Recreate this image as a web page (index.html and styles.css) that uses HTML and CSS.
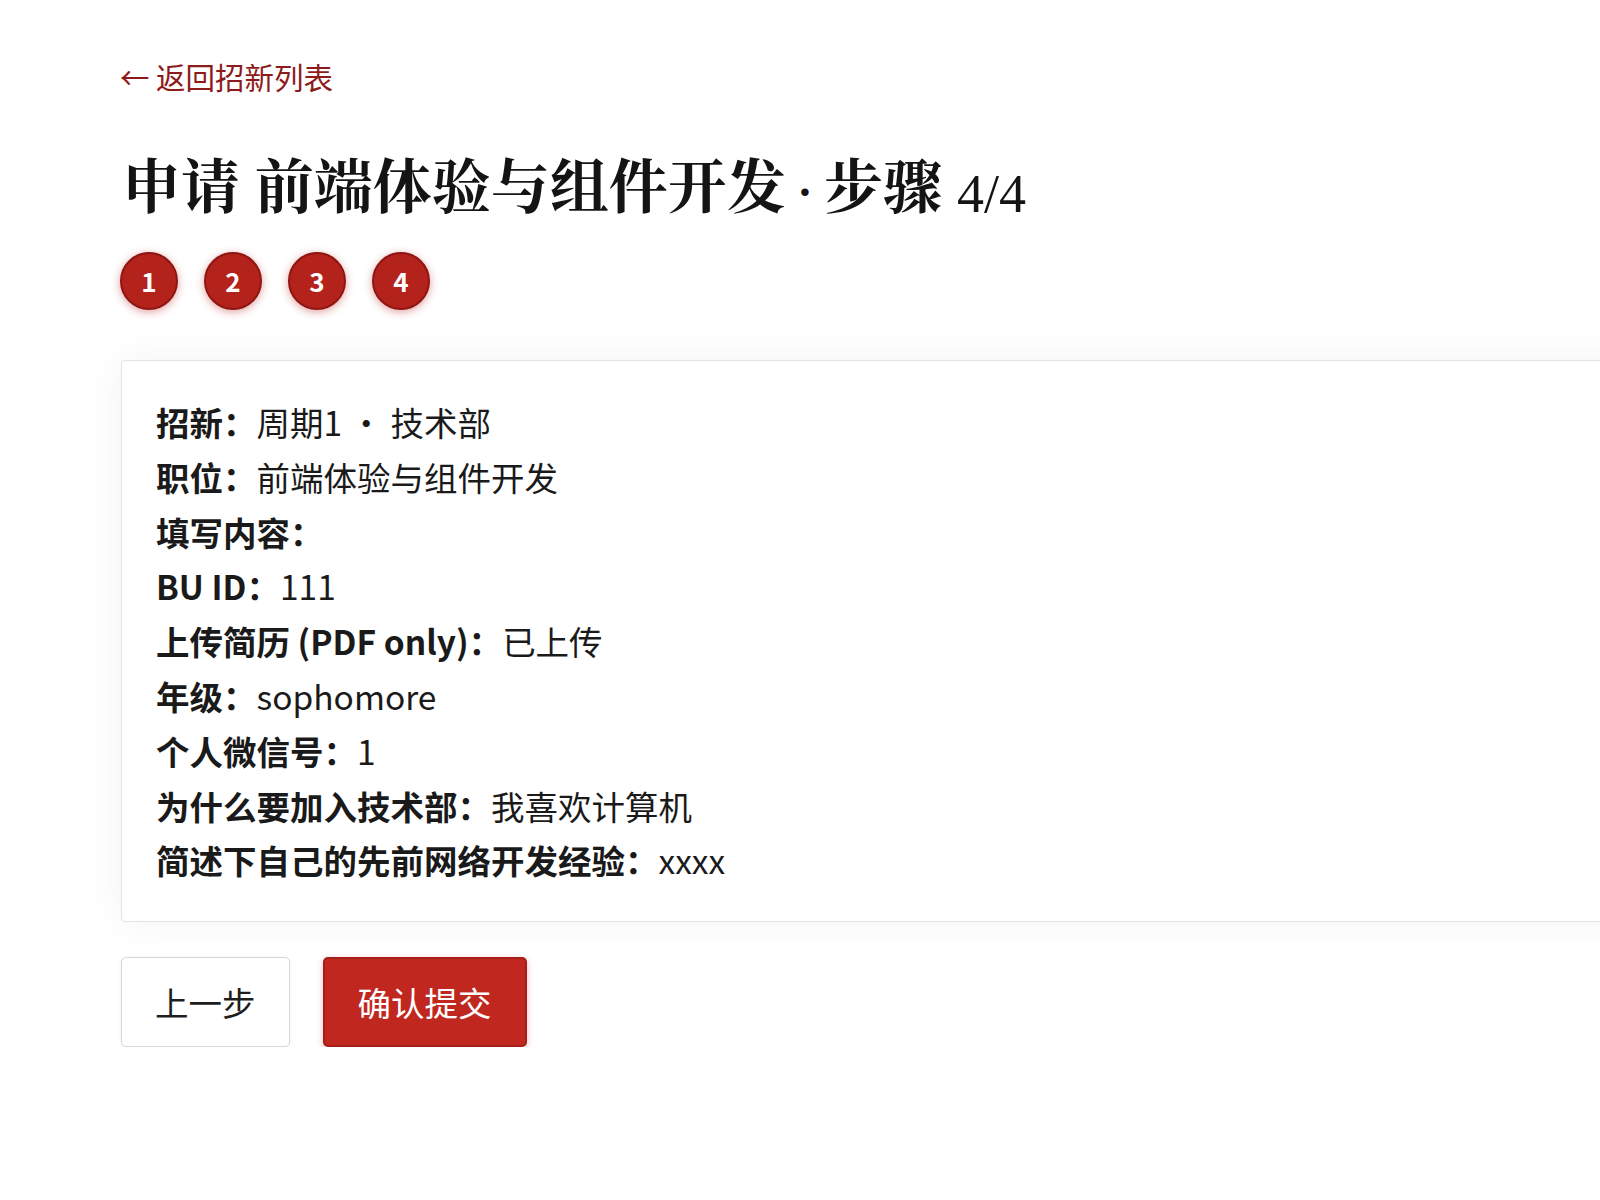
FILE: index.html
```html
<!DOCTYPE html>
<html lang="zh-CN">
<head>
<meta charset="utf-8">
<title>申请 前端体验与组件开发 · 步骤 4/4</title>
<link rel="stylesheet" href="styles.css">
</head>
<body>
<main class="page">
  <a class="back" href="#">← 返回招新列表</a>
  <h1 class="title">申请 前端体验与组件开发<span class="sep"> · </span>步骤 <span class="num">4/4</span></h1>
  <ol class="steps">
    <li class="step">1</li>
    <li class="step">2</li>
    <li class="step">3</li>
    <li class="step">4</li>
  </ol>
  <section class="card">
    <p class="row"><b>招新：</b>周期1 · 技术部</p>
    <p class="row"><b>职位：</b>前端体验与组件开发</p>
    <p class="row"><b>填写内容：</b></p>
    <p class="row"><b>BU ID：</b>111</p>
    <p class="row"><b>上传简历 (PDF only)：</b>已上传</p>
    <p class="row"><b>年级：</b>sophomore</p>
    <p class="row"><b>个人微信号：</b>1</p>
    <p class="row"><b>为什么要加入技术部：</b>我喜欢计算机</p>
    <p class="row"><b>简述下自己的先前网络开发经验：</b>xxxx</p>
  </section>
  <div class="actions">
    <button class="btn btn-ghost" type="button">上一步</button>
    <button class="btn btn-primary" type="button">确认提交</button>
  </div>
</main>
</body>
</html>
```
FILE: styles.css
```css
html, body {
  margin: 0;
  padding: 0;
  background: #ffffff;
  overflow: hidden;
}
body {
  font-family: "Noto Sans CJK SC", "Noto Sans", sans-serif;
  color: #1a1a1a;
}
.page {
  padding: 54px 0 0 120px;
  width: 1560px;
}
.back {
  display: inline-block;
  font-size: 29.5px;
  line-height: 44px;
  color: #8e1b1b;
  text-decoration: none;
}
.title {
  margin: 50px 0 0 2px;
  font-family: "Liberation Serif", "Noto Serif CJK SC", serif;
  font-size: 59px;
  font-weight: 700;
  line-height: 80px;
  color: #141414;
  letter-spacing: 0;
}
.title .sep {
  font-size: 46px;
}
.title .num {
  font-weight: 400;
  font-size: 54px;
  position: relative;
  top: 4px;
}
.steps {
  list-style: none;
  margin: 19px 0 0;
  padding: 0;
  display: flex;
  gap: 26px;
}
.step {
  box-sizing: border-box;
  width: 58px;
  height: 58px;
  border-radius: 50%;
  background: #b4221c;
  border: 2px solid #8f1612;
  box-shadow: 0 2px 8px rgba(190, 40, 40, 0.45);
  color: #ffffff;
  font-size: 26px;
  font-weight: 700;
  display: flex;
  align-items: center;
  justify-content: center;
  line-height: 1;
}
.card {
  margin: 50px 0 0 1px;
  width: 1520px;
  box-sizing: border-box;
  padding: 34px 34px 33px;
  background: #ffffff;
  border: 1px solid #e4e4e4;
  border-radius: 4px;
  box-shadow: 0 0 40px rgba(0, 0, 0, 0.05);
}
.row {
  margin: 0;
  font-size: 33.5px;
  line-height: 54.8px;
  color: #1a1a1a;
}
.row b {
  font-weight: 700;
}
.actions {
  display: flex;
  gap: 33px;
  margin-top: 35px;
  padding-left: 1px;
}
.btn {
  font-family: "Noto Sans CJK SC", "Noto Sans", sans-serif;
  font-size: 33.5px;
  line-height: 50px;
  height: 90px;
  padding: 0 33px;
  border-radius: 5px;
  cursor: pointer;
  box-sizing: border-box;
}
.btn-ghost {
  background: #ffffff;
  color: #1e1e1e;
  border: 1px solid #d8d8d8;
  box-shadow: 0 1px 4px rgba(0, 0, 0, 0.06);
}
.btn-primary {
  background: #c0281f;
  color: #ffffff;
  border: 2px solid #a51e17;
  box-shadow: 0 2px 6px rgba(190, 40, 40, 0.3);
}
```
